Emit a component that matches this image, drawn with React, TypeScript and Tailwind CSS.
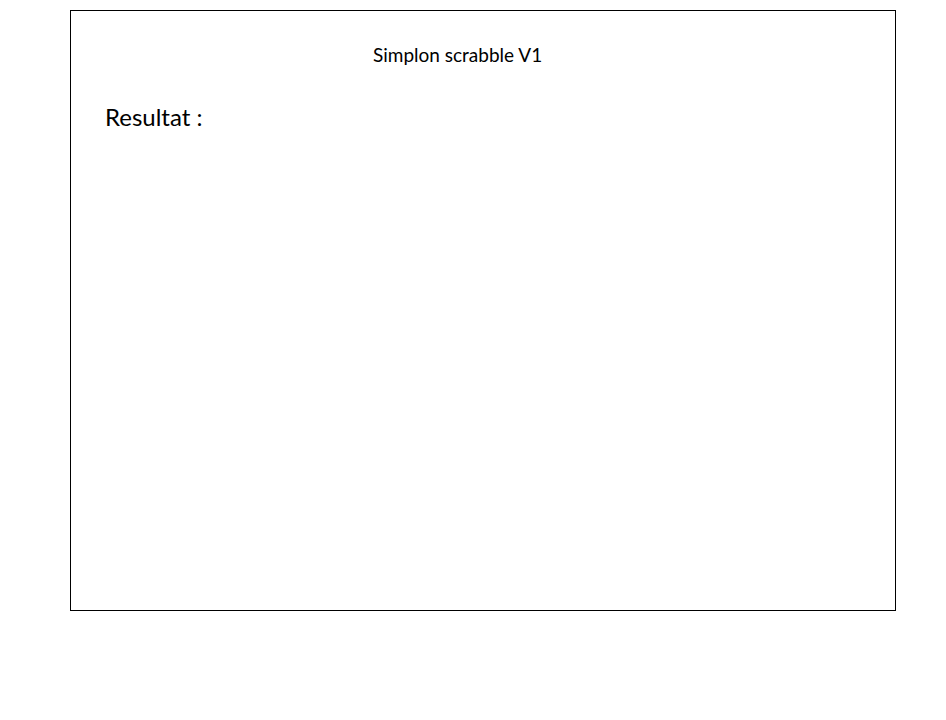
import React from 'react';

const App = () => {
  return (
    <div className="w-[946px] h-[720px] bg-white pt-[10px] pl-[70px]" style={{ fontFamily: '"Lato", "Open Sans", sans-serif' }}>
      {/* Main frame */}
      <div className="w-[826px] h-[601px] border border-black text-black">
        <h1 className="mt-[31px] pl-[302px] text-[19px] leading-[26px] font-normal">Simplon scrabble V1</h1>
        <h2 className="mt-[33px] pl-[34px] text-[24px] leading-[32px] font-normal">Resultat :</h2>
      </div>
    </div>
  );
};

export default App;
